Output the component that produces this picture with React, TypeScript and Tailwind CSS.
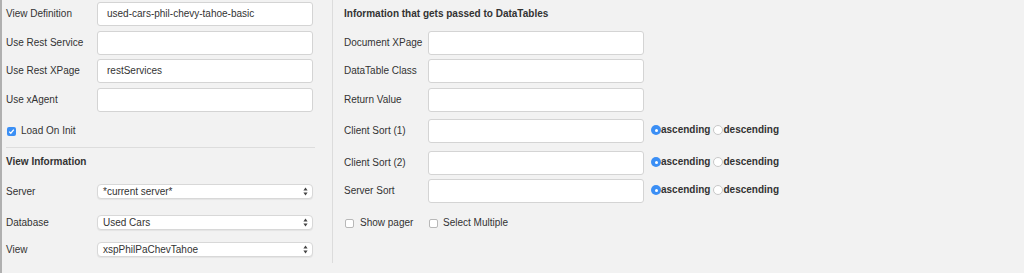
import React from "react";

const font = { fontFamily: '"Liberation Sans", Arial, Helvetica, sans-serif' };

function TextInput({ value, className = "" }: { value?: string; className?: string }) {
  return (
    <div
      className={`h-[24px] w-[216px] shrink-0 rounded-[3px] border border-[#d4d4d4] bg-white pl-[9px] flex items-center text-[10px] text-[#333] ${className}`}
    >
      {value}
    </div>
  );
}

function Select({ value }: { value: string }) {
  return (
    <div className="h-[15px] w-[216px] shrink-0 rounded-[4px] border border-[#d8d8d8] bg-white pl-[5px] pr-[4px] flex items-center justify-between text-[10px] text-[#333] shadow-[0_1px_1px_rgba(0,0,0,0.06)]">
      <span>{value}</span>
      <svg width="5" height="9" viewBox="0 0 5 9">
        <path d="M2.5 0.5 L4.6 3.6 L0.4 3.6 Z" fill="#444" />
        <path d="M2.5 8.5 L4.6 5.4 L0.4 5.4 Z" fill="#444" />
      </svg>
    </div>
  );
}

function Radio({ checked }: { checked?: boolean }) {
  return checked ? (
    <span className="block w-[10px] h-[10px] rounded-full bg-[#3b8ff5] flex items-center justify-center shrink-0">
      <span className="block w-[3px] h-[3px] rounded-full bg-white" />
    </span>
  ) : (
    <span className="block w-[10px] h-[10px] rounded-full bg-white border border-[#c8c8c8] shrink-0" />
  );
}

function Checkbox({ checked }: { checked?: boolean }) {
  return checked ? (
    <span className="block w-[9px] h-[9px] rounded-[2px] bg-[#3b8ff5] flex items-center justify-center shrink-0">
      <svg width="7" height="7" viewBox="0 0 7 7">
        <path d="M1.2 3.6 L2.8 5.2 L5.8 1.6" stroke="white" strokeWidth="1.3" fill="none" />
      </svg>
    </span>
  ) : (
    <span className="block w-[9px] h-[9px] rounded-[2px] bg-white border border-[#b8b8b8] shrink-0" />
  );
}

function LeftRow({ label, value, mt }: { label: string; value?: string; mt: string }) {
  return (
    <div className={`flex items-center ${mt}`}>
      <div className="w-[91px] text-[10px] text-[#333]">{label}</div>
      <TextInput value={value} />
    </div>
  );
}

function SelectRow({ label, value, mt }: { label: string; value: string; mt: string }) {
  return (
    <div className={`flex items-center ${mt}`}>
      <div className="w-[91px] text-[10px] text-[#333]">{label}</div>
      <Select value={value} />
    </div>
  );
}

function RightRow({ label, mt, sort }: { label: string; mt: string; sort?: boolean }) {
  return (
    <div className={`flex items-center ${mt}`}>
      <div className="w-[84px] text-[10px] text-[#333]">{label}</div>
      <TextInput />
      {sort && (
        <div className="flex items-center ml-[7px] -mt-[2px] text-[10px] font-bold text-[#333]">
          <Radio checked />
          <span>ascending</span>
          <span className="ml-[3px] block">
            <Radio />
          </span>
          <span>descending</span>
        </div>
      )}
    </div>
  );
}

export default function App() {
  return (
    <div
      style={font}
      className="w-[1024px] h-[273px] bg-[#f2f2f2] border-l-2 border-[#b0b0b0] flex items-start leading-[12px]"
    >
      <div className="w-[331px] h-[263px] border-r border-[#dcdcdc] pl-[4px] pt-[2px] flex flex-col">
        <LeftRow label="View Definition" value="used-cars-phil-chevy-tahoe-basic" mt="mt-0" />
        <LeftRow label="Use Rest Service" mt="mt-[5px]" />
        <LeftRow label="Use Rest XPage" value="restServices" mt="mt-[4px]" />
        <LeftRow label="Use xAgent" mt="mt-[5px]" />
        <div className="flex items-center h-[12px] mt-[13px] text-[10px] text-[#333]">
          <span className="ml-px block">
            <Checkbox checked />
          </span>
          <span className="ml-[5px]">Load On Init</span>
        </div>
        <div className="mt-[10px] w-[309px] h-px bg-[#dddddd]" />
        <div className="mt-[8px] text-[10px] font-bold text-[#333]">View Information</div>
        <SelectRow label="Server" value="*current server*" mt="mt-[16px]" />
        <SelectRow label="Database" value="Used Cars" mt="mt-[16px]" />
        <SelectRow label="View" value="xspPhilPaChevTahoe" mt="mt-[12px]" />
      </div>
      <div className="pl-[11px] pt-[8px] flex flex-col">
        <div className="text-[10px] font-bold text-[#333]">Information that gets passed to DataTables</div>
        <RightRow label="Document XPage" mt="mt-[11px]" />
        <RightRow label="DataTable Class" mt="mt-[4px]" />
        <RightRow label="Return Value" mt="mt-[5px]" />
        <RightRow label="Client Sort (1)" mt="mt-[7px]" sort />
        <RightRow label="Client Sort (2)" mt="mt-[8px]" sort />
        <RightRow label="Server Sort" mt="mt-[4px]" sort />
        <div className="flex items-center h-[12px] mt-[14px] text-[10px] text-[#333]">
          <div className="w-[84px] flex items-center">
            <span className="ml-px block">
              <Checkbox />
            </span>
            <span className="ml-[6px]">Show pager</span>
          </div>
          <span className="ml-px block">
            <Checkbox />
          </span>
          <span className="ml-[5px]">Select Multiple</span>
        </div>
      </div>
    </div>
  );
}
